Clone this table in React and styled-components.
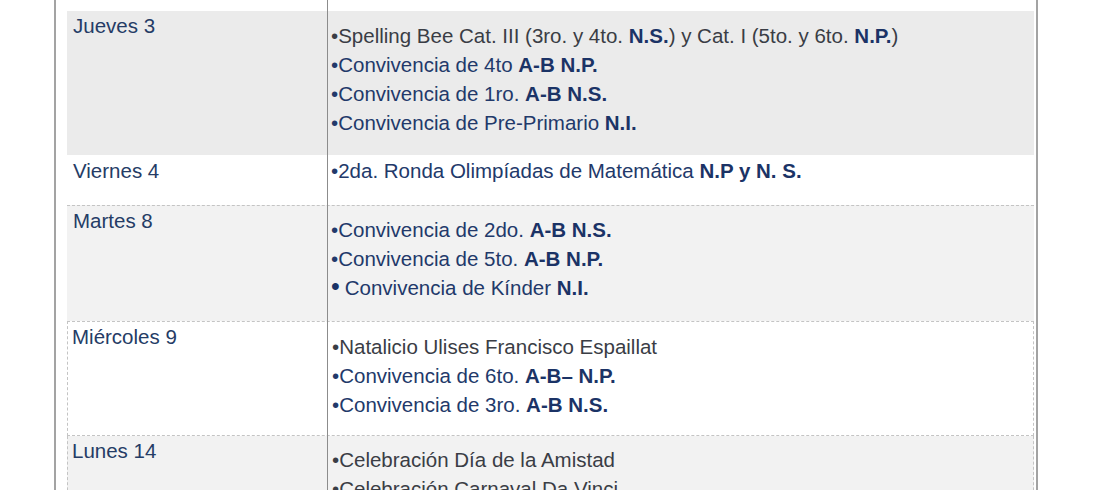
import React from "react";
import styled, { createGlobalStyle } from "styled-components";

const GlobalStyle = createGlobalStyle`
    body {
        margin: 0;
        background: #ffffff;
        font-family: "Liberation Sans", Arial, sans-serif;
        overflow: hidden;
    }
`;

const rows = [
    {
        day: "Jueves 3",
        bg: "#ebebeb",
        h: 144,
        labelTop: 0,
        textTop: 10,
        items: [
            [
                { t: "Spelling Bee Cat. III (3ro. y 4to. ", tone: "gray" },
                { t: "N.S.", b: true },
                { t: ") y Cat. I (5to. y 6to. ", tone: "gray" },
                { t: "N.P.", b: true },
                { t: ")", tone: "gray" },
            ],
            [{ t: "Convivencia de 4to " }, { t: "A-B N.P.", b: true }],
            [{ t: "Convivencia de 1ro. " }, { t: "A-B N.S.", b: true }],
            [{ t: "Convivencia de Pre-Primario " }, { t: "N.I.", b: true }],
        ],
    },
    {
        day: "Viernes 4",
        bg: "#ffffff",
        h: 50,
        labelTop: 1,
        textTop: 1,
        items: [
            [
                { t: "2da. Ronda Olimpíadas de Matemática " },
                { t: "N.P y N. S.", b: true },
            ],
        ],
    },
    {
        day: "Martes 8",
        bg: "#f2f2f2",
        h: 116,
        labelTop: 0,
        textTop: 9,
        border: "top",
        items: [
            [{ t: "Convivencia de 2do. " }, { t: "A-B N.S.", b: true }],
            [{ t: "Convivencia de 5to. " }, { t: "A-B N.P.", b: true }],
            [{ t: "Convivencia de Kínder " }, { t: "N.I.", b: true }],
        ],
        bigLast: true,
    },
    {
        day: "Miércoles 9",
        bg: "#ffffff",
        h: 115,
        labelTop: 0,
        textTop: 10,
        border: "all",
        items: [
            [{ t: "Natalicio Ulises Francisco Espaillat", tone: "gray" }],
            [{ t: "Convivencia de 6to. " }, { t: "A-B– N.P.", b: true }],
            [{ t: "Convivencia de 3ro. " }, { t: "A-B N.S.", b: true }],
        ],
    },
    {
        day: "Lunes 14",
        bg: "#f2f2f2",
        h: 80,
        labelTop: 0,
        textTop: 9,
        border: "sides",
        items: [
            [{ t: "Celebración Día de la Amistad", tone: "gray" }],
            [{ t: "Celebración Carnaval Da Vinci", tone: "gray" }],
        ],
    },
];

const App = () => {
    return (
        <>
            <GlobalStyle />
            <Frame>
                {rows.map((row) => (
                    <Row key={row.day} $bg={row.bg} $h={row.h} $border={row.border}>
                        <Day $top={row.labelTop} $inset={row.border === "all" || row.border === "sides"}>
                            {row.day}
                        </Day>
                        <Events $top={row.textTop}>
                            {row.items.map((line, i) => {
                                const big = row.bigLast && i === row.items.length - 1;
                                return (
                                    <Line key={i} $tone={line[0].tone}>
                                        {big ? <BigBullet>•</BigBullet> : "•"}
                                        {line.map((part, j) =>
                                            part.b ? (
                                                <Strong key={j}>{part.t}</Strong>
                                            ) : (
                                                <span key={j}>{part.t}</span>
                                            )
                                        )}
                                    </Line>
                                );
                            })}
                        </Events>
                    </Row>
                ))}
            </Frame>
        </>
    );
};

export default App;

const Frame = styled.div`
    position: relative;
    box-sizing: border-box;
    width: 984px;
    height: 490px;
    margin-left: 54px;
    padding: 11px 2px 0 11px;
    border-left: 2px solid #a3a3a3;
    border-right: 2px solid #a3a3a3;
    overflow: hidden;

    &::before {
        content: "";
        position: absolute;
        top: 0;
        bottom: 0;
        left: 271px;
        width: 1px;
        background: #8c8c8c;
        z-index: 2;
    }
`;

const Row = styled.div`
    box-sizing: border-box;
    display: grid;
    grid-template-columns: 260px 1fr;
    height: ${(p) => p.$h}px;
    background: ${(p) => p.$bg};
    border-top: ${(p) =>
        p.$border === "top" || p.$border === "all" ? "1px dashed #c4c4c4" : "none"};
    border-bottom: ${(p) => (p.$border === "all" ? "1px dashed #c4c4c4" : "none")};
    border-left: ${(p) =>
        p.$border === "all" || p.$border === "sides" ? "1px dashed #c4c4c4" : "none"};
    border-right: ${(p) =>
        p.$border === "all" || p.$border === "sides" ? "1px dashed #c4c4c4" : "none"};
`;

const Day = styled.div`
    padding: ${(p) => p.$top}px 0 0 ${(p) => (p.$inset ? 4 : 6)}px;
    font-size: 20.5px;
    line-height: 29px;
    color: #253c66;
`;

const Events = styled.div`
    padding: ${(p) => p.$top}px 0 0 4px;
    font-size: 20.5px;
    line-height: 29px;
`;

const Line = styled.div`
    white-space: nowrap;
    color: ${(p) => (p.$tone === "gray" ? "#3a3d45" : "#22396a")};
`;

const Strong = styled.b`
    font-weight: bold;
    color: #1b3366;
`;

const BigBullet = styled.span`
    display: inline-block;
    font-size: 25px;
    line-height: 19px;
    margin-right: 5px;
    color: #1b3366;
`;
